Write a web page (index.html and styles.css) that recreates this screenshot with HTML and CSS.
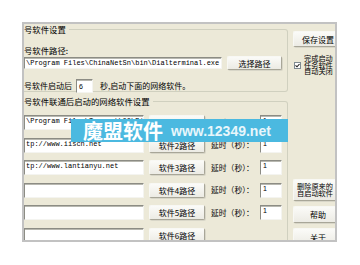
FILE: index.html
```html
<!DOCTYPE html>
<html>
<head>
<meta charset="utf-8">
<link rel="stylesheet" href="styles.css">
</head>
<body>
<div class="panel">
  <div class="cols">
    <div class="leftcol">
      <div class="group g1">
        <div class="cap">号软件设置</div>
        <div class="lbl l-path">号软件路径:</div>
        <div class="row r-path">
          <div class="inp path">\Program Files\ChinaNetSn\bin\Dialterminal.exe</div>
          <div class="btn b-sel">选择路径</div>
        </div>
        <div class="row r-delay">
          <span class="txt">号软件启动后</span>
          <div class="inp six">6</div>
          <span class="txt">秒,启动下面的网络软件。</span>
        </div>
      </div>
      <div class="group g2">
        <div class="cap">号软件联通后启动的网络软件设置</div>
        <div class="rows">
          <div class="row net">
            <div class="inp url">\Program Files\Tencent\QQ\Bin\QQ.exe</div>
            <div class="btn b-soft">软件1路径</div>
            <span class="dl">延时（秒）：</span>
            <div class="inp sec">1</div>
          </div>
          <div class="row net">
            <div class="inp url">tp://www.iiscn.net</div>
            <div class="btn b-soft">软件2路径</div>
            <span class="dl">延时（秒）：</span>
            <div class="inp sec">1</div>
          </div>
          <div class="row net">
            <div class="inp url">tp://www.lantianyu.net</div>
            <div class="btn b-soft">软件3路径</div>
            <span class="dl">延时（秒）：</span>
            <div class="inp sec">1</div>
          </div>
          <div class="row net">
            <div class="inp url"></div>
            <div class="btn b-soft">软件4路径</div>
            <span class="dl">延时（秒）：</span>
            <div class="inp sec">1</div>
          </div>
          <div class="row net">
            <div class="inp url"></div>
            <div class="btn b-soft">软件5路径</div>
            <span class="dl">延时（秒）：</span>
            <div class="inp sec">1</div>
          </div>
          <div class="row net">
            <div class="inp url"></div>
            <div class="btn b-soft">软件6路径</div>
          </div>
        </div>
      </div>
    </div>
    <div class="rightcol">
      <div class="btn rb b-save">保存设置</div>
      <div class="chk">
        <span class="box"><svg width="5" height="5" viewBox="0 0 5 5"><path d="M0.5 2.3 L2 3.8 L4.5 1" fill="none" stroke="#1f1f1f" stroke-width="1.1"/></svg></span>
        <span class="chktxt">完成启动<br>任务软件<br>自动关闭</span>
      </div>
      <div class="spacer"></div>
      <div class="btn rb b-del"><span class="deltxt">删除原来的<br>自启动软件</span></div>
      <div class="btn rb b-help">帮助</div>
      <div class="btn rb b-about">关于</div>
    </div>
  </div>
  <div class="mark">
    <span class="mk-cn">魔盟软件</span>
    <span class="mk-url">www.12349.net</span>
  </div>
</div>
</body>
</html>
```

FILE: styles.css
```css
* { box-sizing: border-box; }
html, body { margin: 0; padding: 0; background: #ffffff; }
body {
  font-family: "Noto Sans CJK SC", "Liberation Sans", sans-serif;
  font-size: 8px;
  color: #000;
}
.panel {
  position: relative;
  margin: 22px 0 0 22px;
  width: 315px;
  height: 220px;
  border: 2px solid #c2c2c2;
  background: #ece9d8;
  overflow: hidden;
}
.cols { display: flex; }
.leftcol { width: 264px; flex: none; }
.rightcol {
  width: 50px;
  flex: none;
  margin-left: 5px;
  padding-top: 7px;
  display: flex;
  flex-direction: column;
}
.group {
  border: 1px solid #d0d0bf;
  border-left: none;
  border-radius: 0 3px 3px 0;
}
.g1 { margin-top: 5px; height: 63px; }
.g2 { margin-top: 9px; height: 200px; }
.cap {
  display: inline-block;
  background: #ece9d8;
  line-height: 10px;
  height: 10px;
  margin-top: -6px;
  padding-right: 3px;
  font-size: 8.4px;
  vertical-align: top;
}
.lbl { line-height: 10px; height: 10px; margin-top: 4px; font-size: 8.4px; }
.row { display: flex; align-items: center; }
.r-path { margin-top: 1px; height: 14px; }
.inp {
  background: #fff;
  border: 1px solid;
  border-color: #8c8c84 #f4f4f0 #f4f4f0 #8c8c84;
  box-shadow: inset 0 1px 0 #b8b8b0;
  font-family: "Liberation Mono", monospace;
  font-size: 7px;
  line-height: 9px;
  white-space: nowrap;
  overflow: hidden;
  padding: 1px 0 0 1px;
}
.path { width: 198px; height: 12px; }
.btn {
  display: flex;
  align-items: center;
  justify-content: center;
  text-align: center;
  background: linear-gradient(#fbfbf8, #ecebe4);
  border: 1px solid;
  border-color: #f8f8f4 #a8a698 #a8a698 #f8f8f4;
  box-shadow: 1px 1px 0 #d8d6c8;
  border-radius: 2px;
  font-size: 8px;
  line-height: 9px;
  white-space: nowrap;
}
.b-sel { width: 55px; height: 14px; margin-left: 5px; }
.r-delay { margin-top: 9px; height: 14px; }
.r-delay .txt { font-size: 8px; line-height: 10px; }
.six { width: 17px; height: 14px; margin: 0 7px 0 4px; font-family: "Liberation Sans", sans-serif; font-size: 7px; padding: 2px 0 0 2px; }
.rows {
  margin-top: 2px;
  display: flex;
  flex-direction: column;
  gap: 7.5px;
}
.net { height: 15px; }
.url { width: 120px; height: 15px; }
.b-soft { width: 56px; height: 15px; margin-left: 5px; }
.dl { margin-left: 6px; width: 49px; font-size: 7.8px; line-height: 10px; }
.sec { width: 22px; height: 15px; font-family: "Liberation Sans", sans-serif; font-size: 7px; padding: 0 0 0 2px; }
.rb { width: 50px; flex: none; }
.b-save { height: 16px; }
.chk { display: flex; align-items: center; margin-top: 7px; height: 22px; }
.box {
  display: flex;
  align-items: center;
  justify-content: center;
  width: 7px; height: 7px;
  background: #fff;
  border: 1px solid #7f8a90;
  flex: none;
  margin-left: 1px;
}
.chktxt { margin-left: 3px; line-height: 6.6px; font-size: 7.2px; white-space: nowrap; }
.spacer { height: 103px; flex: none; }
.b-del { height: 22px; justify-content: flex-start; padding-left: 3px; }
.deltxt { line-height: 6.6px; font-size: 7.2px; text-align: center; }
.b-help { height: 17px; margin-top: 5px; }
.b-about { height: 17px; margin-top: 5px; align-items: flex-start; padding-top: 4px; }
.mark {
  position: absolute;
  left: 47px;
  top: 95px;
  width: 217px;
  height: 23px;
  background: #4bb9e0;
  display: flex;
  align-items: center;
  color: #fff;
  font-weight: bold;
}
.mk-cn { margin-left: 12px; font-size: 20px; line-height: 23px; font-family: "Noto Sans CJK SC", sans-serif; }
.mk-url { margin-left: 8px; font-size: 14px; font-family: "Liberation Sans", sans-serif; color: #e8f6fb; }
```
